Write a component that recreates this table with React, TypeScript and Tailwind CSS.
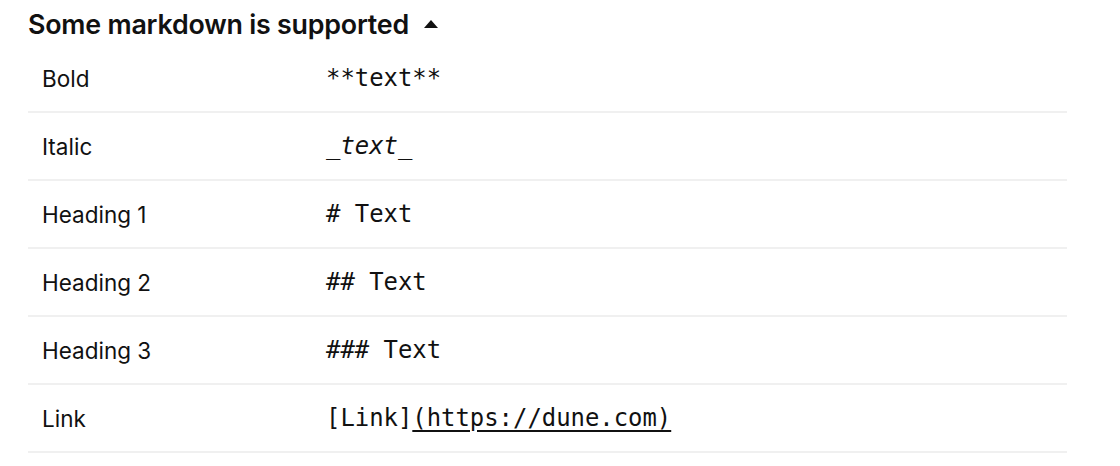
import React from 'react';

const rows: { label: string; syntax: React.ReactNode }[] = [
  { label: 'Bold', syntax: '**text**' },
  { label: 'Italic', syntax: <span className="italic">_text_</span> },
  { label: 'Heading 1', syntax: '# Text' },
  { label: 'Heading 2', syntax: '## Text' },
  { label: 'Heading 3', syntax: '### Text' },
  {
    label: 'Link',
    syntax: (
      <>
        [Link]<span className="underline underline-offset-4">(https://dune.com)</span>
      </>
    ),
  },
];

export default function App() {
  return (
    <div className="w-[1120px] h-[466px] bg-white text-[#111] font-['Inter','Noto_Sans',sans-serif] pl-[28px] pr-[53px]">
      <div className="h-[45px] flex items-center gap-[15px] pt-[4px]">
        <h2 className="text-[26.8px] font-semibold tracking-[-0.2px]">Some markdown is supported</h2>
        <svg width="14" height="8" viewBox="0 0 14 8" className="mt-[-1px]">
          <path d="M7 0 L14 8 L0 8 Z" fill="#111" />
        </svg>
      </div>
      <div>
        {rows.map((r) => (
          <div key={r.label} className="h-[68px] flex items-center border-b-2 border-[#f0f0f0] pt-[2px]">
            <div className="w-[298px] pl-[14px] text-[22.5px]">{r.label}</div>
            <div className="font-['DejaVu_Sans_Mono','Liberation_Mono',monospace] text-[23.9px]">{r.syntax}</div>
          </div>
        ))}
      </div>
    </div>
  );
}
